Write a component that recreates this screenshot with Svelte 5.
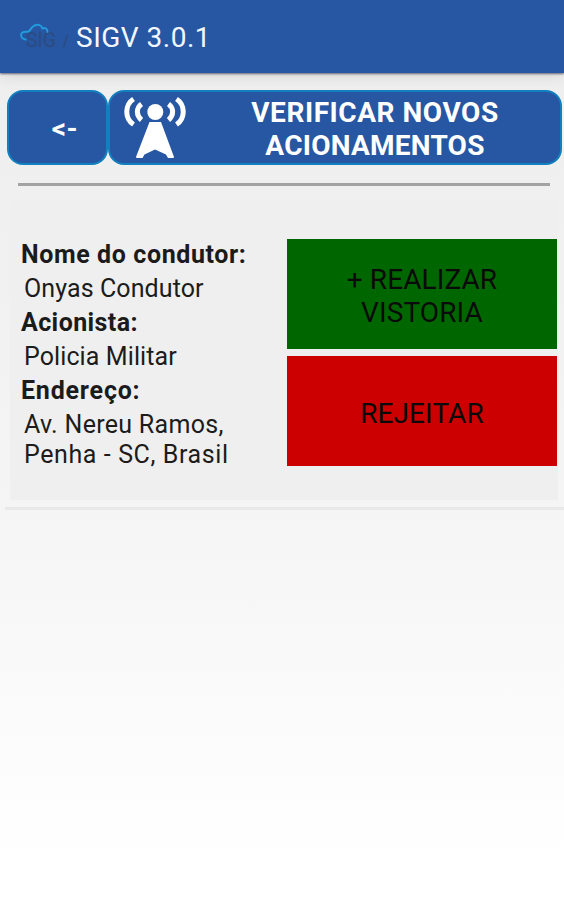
<script lang="ts">
  const version = '3.0.1';

  const fields = [
    { name: 'driver', label: 'Nome do condutor:', lines: ['Onyas Condutor'] },
    { name: 'caller', label: 'Acionista:', lines: ['Policia Militar'] },
    { name: 'address', label: 'Endereço:', lines: ['Av. Nereu Ramos,', 'Penha - SC, Brasil'] }
  ];
</script>

<div class="screen">
  <header>
    <svg class="logo" viewBox="0 0 52 32" aria-hidden="true">
      <text class="mark" x="7" y="24.500" textLength="30" lengthAdjust="spacingAndGlyphs">SIG</text>
      <path class="slash" d="M44.500 25 L48.500 13" />
      <path
        class="cloud"
        d="M6.500 17.500 C3 17 1 14 2.500 11.500 C4 9 7 10 9.500 9.500 C11 9 11 7 14 4.500 C18 1 22.500 3 23.500 6.500 C26 5 28.500 7 28.500 10"
      />
    </svg>
    <h1>SIGV {version}</h1>
  </header>

  <nav>
    <button class="back">&lt;-</button>
    <button class="check">
      <svg viewBox="0 0 64 64" aria-hidden="true">
        <circle cx="32.300" cy="16" r="8" />
        <path d="M26.500 26 H38 L51 61 Q51 62 50 62 H45 L43 58.500 L32 53.500 L21.500 58.500 L19.500 62 H14 Q13 62 13 61 Z" />
        <path class="wave" d="M18.500 8 C13 12 13 19.500 18.500 24 M10.500 3 C1.500 9 1.500 22.500 10.500 28.500" />
        <path class="wave" d="M45.500 8 C51 12 51 19.500 45.500 24 M53.500 3 C62.500 9 62.500 22.500 53.500 28.500" />
      </svg>
      <span class="caption">
        <span class="wide">VERIFICAR NOVOS</span>
        <span>ACIONAMENTOS</span>
      </span>
    </button>
  </nav>

  <hr />

  <main>
    <dl>
      {#each fields as field}
        <dt class={field.name}>{field.label}</dt>
        <dd class={field.name}>
          {#each field.lines as line}
            <span>{line}</span>
          {/each}
        </dd>
      {/each}
    </dl>
    <div class="actions">
      <button class="accept"><span>+ REALIZAR</span><span>VISTORIA</span></button>
      <button class="reject">REJEITAR</button>
    </div>
  </main>
  <div class="divider"></div>
</div>

<style>
  :global(body) {
    background: #fff;
  }

  .screen {
    display: flex;
    flex-direction: column;
    box-sizing: border-box;
    height: 900px;
    overflow: hidden;
    color: #1c1c1c;
    background: linear-gradient(180deg, #eeeeee 0, #f0f0f0 220px, #f5f5f5 510px, #ffffff 860px);
    font-family: Roboto, 'Noto Sans', sans-serif;
  }

  header {
    display: flex;
    align-items: center;
    flex: none;
    height: 73px;
    padding-left: 19px;
    background: #2757a3;
    box-shadow: 0 1px 2px rgba(60, 60, 75, 0.75), 0 3px 14px rgba(0, 0, 0, 0.1);
  }

  .logo {
    width: 52px;
    height: 32px;
    margin-top: 2px;
  }

  .mark {
    fill: #2b4d86;
    stroke: #2b4d86;
    stroke-width: 0.5;
    font-size: 20px;
  }

  .slash {
    stroke: #2b4d86;
    stroke-width: 2;
  }

  .cloud {
    fill: none;
    stroke: #219bdc;
    stroke-width: 2;
    stroke-linecap: round;
  }

  h1 {
    margin: 2px 0 0 5px;
    color: #f4f7ff;
    font-size: 28px;
    font-weight: 400;
    letter-spacing: 0.5px;
    line-height: 36px;
  }

  button {
    margin: 0;
    padding: 0;
    border: 0;
    font-family: inherit;
  }

  nav {
    display: flex;
    flex: none;
    height: 75px;
    margin: 17px 2px 0 7px;
  }

  nav button {
    box-sizing: border-box;
    border: 2px solid #1280be;
    border-radius: 16px;
    background: #2757a3;
    color: #fff;
    font-size: 28px;
    font-weight: 700;
  }

  .back {
    width: 101px;
    padding: 2px 0 0 15px;
    letter-spacing: 0.5px;
  }

  .check {
    display: flex;
    align-items: center;
    flex: 1;
    padding-left: 13px;
  }

  .check svg {
    flex: none;
    width: 64px;
    height: 64px;
    fill: #fff;
  }

  .check .wave {
    fill: none;
    stroke: #fff;
    stroke-width: 5;
  }

  .caption {
    display: flex;
    flex: 1;
    flex-direction: column;
    align-items: center;
    padding: 3px 0 0 3px;
    letter-spacing: 0.25px;
    line-height: 33px;
    white-space: nowrap;
  }

  .caption .wide {
    letter-spacing: 0.55px;
  }

  hr {
    flex: none;
    width: 532px;
    height: 3px;
    margin: 18px 0 0 18px;
    border: 0;
    background: #a3a3a3;
  }

  main {
    display: flex;
    flex: none;
    box-sizing: border-box;
    height: 300px;
    margin: 14px 6px 0 10px;
    padding: 39px 1px 0 11px;
    background: #efefef;
  }

  dl {
    width: 266px;
    margin: -1px 0 0;
  }

  dt {
    color: #1b1b1b;
    font-size: 25px;
    font-weight: 700;
    letter-spacing: 0.6px;
    line-height: 34px;
  }

  dt.caller {
    letter-spacing: 0.4px;
  }

  dt.address {
    letter-spacing: 0.8px;
  }

  dd {
    display: flex;
    flex-direction: column;
    margin: 0;
    padding: 2px 0 2px 3px;
    font-size: 25px;
    letter-spacing: 0.1px;
    line-height: 30px;
    white-space: nowrap;
  }

  dd.address {
    letter-spacing: 0.3px;
  }

  dd.address span:last-child {
    letter-spacing: 0.6px;
  }

  .actions {
    display: flex;
    flex: 1;
    flex-direction: column;
    gap: 7px;
  }

  .actions button {
    display: flex;
    flex-direction: column;
    align-items: center;
    justify-content: center;
    box-sizing: border-box;
    height: 110px;
    padding-top: 4px;
    color: #0a0a0a;
    font-size: 28px;
    letter-spacing: 0.1px;
    line-height: 33px;
  }

  .actions .accept {
    background: #006700;
  }

  .actions .reject {
    background: #cc0000;
  }

  .divider {
    flex: none;
    height: 3px;
    margin: 7px 0 0 5px;
    background: #e9e9e9;
  }
</style>
